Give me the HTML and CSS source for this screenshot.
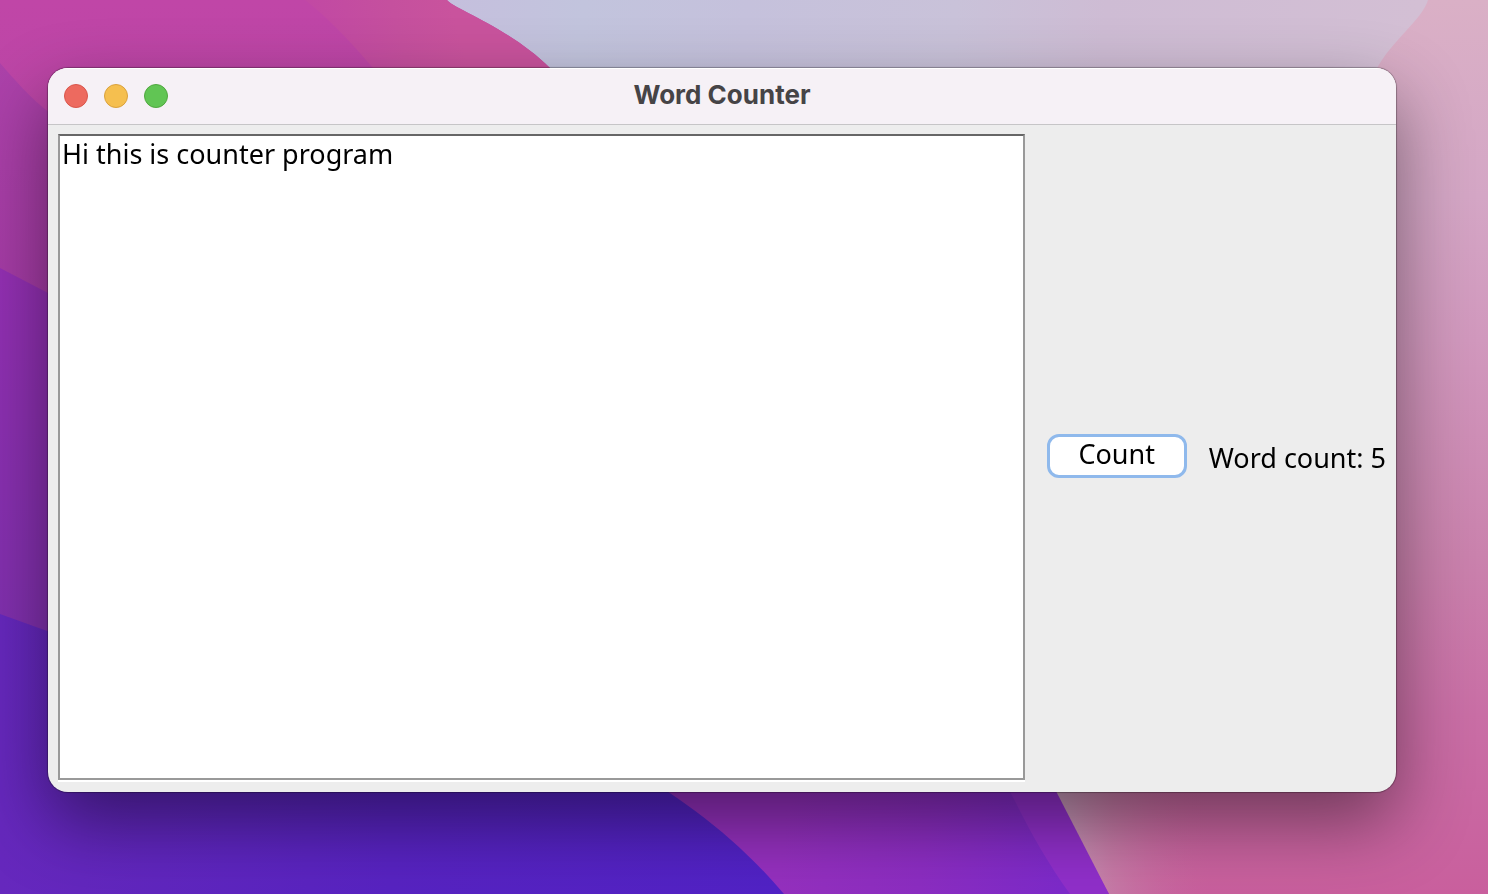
FILE: index.html
```html
<!DOCTYPE html>
<html lang="en">
<head>
<meta charset="utf-8">
<title>Word Counter</title>
<link rel="stylesheet" href="styles.css">
</head>
<body>
<svg class="wallpaper" viewBox="0 0 1488 894" preserveAspectRatio="none" aria-hidden="true">
  <defs>
    <linearGradient id="sky" x1="0" x2="1488" y1="0" y2="100" gradientUnits="userSpaceOnUse">
      <stop offset="0.3" stop-color="#c5bfdd"/>
      <stop offset="0.39" stop-color="#c2c4dd"/>
      <stop offset="0.5" stop-color="#c5c1dc"/>
      <stop offset="0.64" stop-color="#c9c2d9"/>
      <stop offset="0.74" stop-color="#cebcd4"/>
      <stop offset="0.95" stop-color="#d3bfd4"/>
    </linearGradient>
    <linearGradient id="rose" x1="0" x2="0" y1="0" y2="1">
      <stop offset="0" stop-color="#dab0c6"/>
      <stop offset="0.22" stop-color="#d4a6c5"/>
      <stop offset="0.38" stop-color="#d198bd"/>
      <stop offset="0.62" stop-color="#ca82ad"/>
      <stop offset="0.8" stop-color="#c96ea5"/>
      <stop offset="1" stop-color="#c95f9d"/>
    </linearGradient>
    <linearGradient id="rose-edge" x1="1060" x2="1210" y1="0" y2="0" gradientUnits="userSpaceOnUse">
      <stop offset="0" stop-color="#c698b8"/>
      <stop offset="0.35" stop-color="#c67fa8" stop-opacity="0.8"/>
      <stop offset="1" stop-color="#c9679e" stop-opacity="0"/>
    </linearGradient>
    <linearGradient id="magenta" x1="0" x2="0" y1="0" y2="300" gradientUnits="userSpaceOnUse">
      <stop offset="0" stop-color="#c046a7"/>
      <stop offset="1" stop-color="#b345a5"/>
    </linearGradient>
    <linearGradient id="plum" x1="0" x2="0" y1="60" y2="300" gradientUnits="userSpaceOnUse">
      <stop offset="0" stop-color="#ad42aa"/>
      <stop offset="1" stop-color="#a43ba5"/>
    </linearGradient>
    <linearGradient id="pink" x1="310" x2="450" y1="40" y2="0" gradientUnits="userSpaceOnUse">
      <stop offset="0" stop-color="#c148a4"/>
      <stop offset="0.6" stop-color="#c5509e"/>
      <stop offset="1" stop-color="#c9539d"/>
    </linearGradient>
    <linearGradient id="violet" x1="0" x2="0" y1="260" y2="640" gradientUnits="userSpaceOnUse">
      <stop offset="0" stop-color="#9430b3"/>
      <stop offset="1" stop-color="#8030ae"/>
    </linearGradient>
    <linearGradient id="indigo" x1="0" x2="780" y1="0" y2="0" gradientUnits="userSpaceOnUse">
      <stop offset="0" stop-color="#6628bd"/>
      <stop offset="0.5" stop-color="#5823c2"/>
      <stop offset="1" stop-color="#5122c6"/>
    </linearGradient>
    <linearGradient id="purple" x1="780" x2="1060" y1="860" y2="894" gradientUnits="userSpaceOnUse">
      <stop offset="0" stop-color="#9530bf"/>
      <stop offset="0.5" stop-color="#8c2dc2"/>
      <stop offset="1" stop-color="#7d2aca"/>
    </linearGradient>
  </defs>
  <rect width="1488" height="894" fill="url(#sky)"/>
  <path d="M1428 0C1422 20 1392 40 1376 70L1000 894H1488V0Z" fill="url(#rose)"/>
  <path d="M1000 700H1210V894H1000Z" fill="url(#rose-edge)"/>
  <path d="M0 0H447C452 8 510 28 550 68L1000 690C1040 760 1070 825 1109 894H0Z" fill="url(#magenta)"/>
  <path d="M305 0H447C452 8 510 28 550 68V130H430C380 80 350 35 305 0Z" fill="url(#pink)"/>
  <path d="M0 63C15 80 30 98 50 113V400H0Z" fill="url(#plum)"/>
  <path d="M0 268L50 294V700H0Z" fill="url(#violet)"/>
  <path d="M640 760H1040L1109 894H640Z" fill="#902fca"/>
  <path d="M640 760H995C1014 800 1038 850 1070 894H640Z" fill="url(#purple)"/>
  <path d="M0 614L50 632L600 750C670 790 730 830 784 894H0Z" fill="url(#indigo)"/>
</svg>
<main class="window">
  <header class="titlebar">
    <div class="lights">
      <button class="light close" type="button" aria-label="Close"></button>
      <button class="light minimize" type="button" aria-label="Minimize"></button>
      <button class="light zoom" type="button" aria-label="Zoom"></button>
    </div>
    <h1 class="title">Word Counter</h1>
  </header>
  <div class="content">
    <textarea class="editor" aria-label="Text to count" spellcheck="false">Hi this is counter program</textarea>
    <button class="count" type="button">Count</button>
    <output class="result">Word count: 5</output>
  </div>
</main>
</body>
</html>
```
FILE: styles.css
```css
* {
  box-sizing: border-box;
}

body {
  display: flex;
  min-height: 100vh;
  margin: 0;
  padding: 68px 92px 102px 48px;
  color: #000;
  font-family: "Noto Sans", "Open Sans", sans-serif;
  font-size: 27px;
  line-height: 32px;
}

.wallpaper {
  position: fixed;
  inset: 0;
  z-index: -1;
  width: 100%;
  height: 100%;
}

.window {
  display: flex;
  flex: 1;
  flex-direction: column;
  min-width: 0;
  overflow: hidden;
  border-radius: 20px;
  background: #ededed;
  box-shadow: 0 0 1px 1px rgba(0, 0, 0, 0.3), 0 30px 72px rgba(0, 0, 0, 0.45);
}

.titlebar {
  display: grid;
  grid-template-columns: 1fr auto 1fr;
  align-items: center;
  height: 57px;
  padding: 0 16px;
  border-bottom: 1px solid #c6c5c7;
  background: #f6f1f6;
  box-shadow: inset 0 1px #fff;
}

.lights {
  display: flex;
  gap: 16px;
}

.light {
  width: 24px;
  height: 24px;
  padding: 0;
  border: 1px solid;
  border-radius: 50%;
}

.close {
  border-color: #d9564c;
  background: #ed6a5f;
}

.minimize {
  border-color: #d9a13d;
  background: #f5bf4f;
}

.zoom {
  border-color: #50a73f;
  background: #61c554;
}

.title {
  margin: 0;
  padding-bottom: 2px;
  color: #464446;
  font-family: Inter, sans-serif;
  font-size: 26px;
  font-weight: 700;
  line-height: 32px;
}

.content {
  display: flex;
  flex: 1;
  align-items: center;
  gap: 22px;
  padding: 9px 10px 12px;
}

.editor {
  flex: 1;
  align-self: stretch;
  min-width: 0;
  padding: 2px;
  border: 2px solid #999;
  border-top-color: #666;
  border-radius: 0;
  outline: 0;
  background: #fff;
  box-shadow: 0 2px #fff;
  color: inherit;
  font: inherit;
  resize: none;
}

.count {
  width: 140px;
  height: 44px;
  margin-bottom: 2px;
  padding: 0 0 4px;
  border: 3px solid #8fb9ec;
  border-radius: 12px;
  background: #fff;
  color: inherit;
  font: inherit;
}

.result {
  padding-top: 2px;
  white-space: nowrap;
}
```
